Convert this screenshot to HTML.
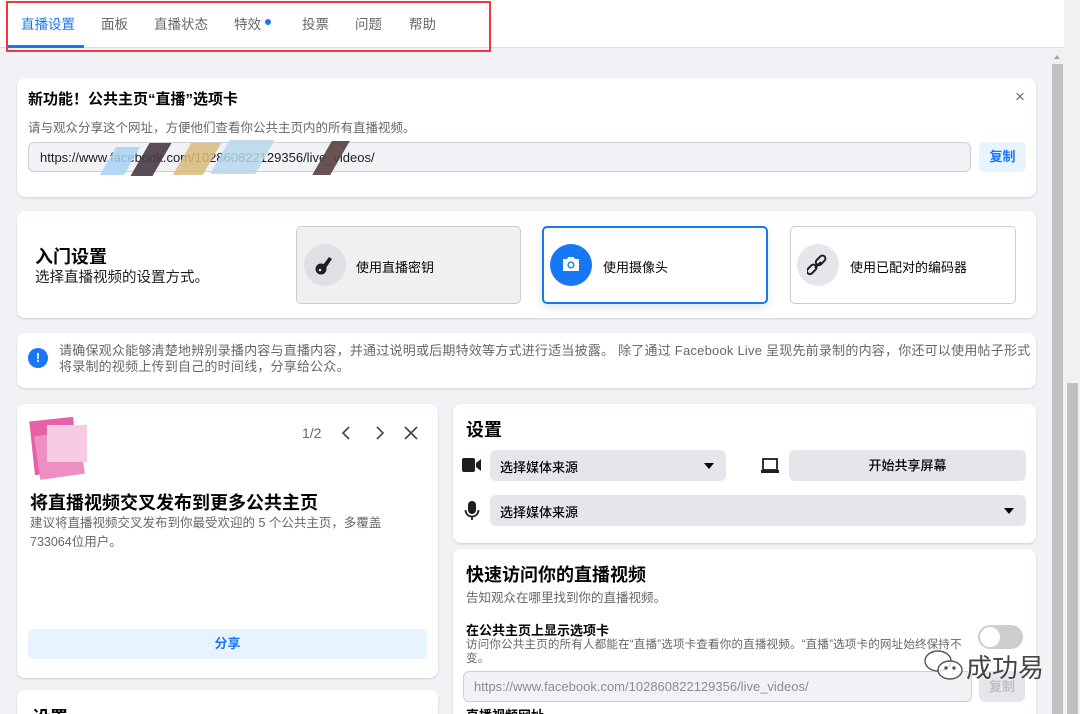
<!DOCTYPE html>
<html style="overflow:hidden"><head><meta charset="utf-8"><style>
*{box-sizing:border-box;margin:0;padding:0}
html,body{width:1080px;height:714px;overflow:hidden}
body{background:#f0f2f5;font-family:"Liberation Sans","Noto Sans CJK SC",sans-serif;color:#050505;position:relative}
.abs{position:absolute}
.card{position:absolute;background:#fff;border-radius:8px;box-shadow:0 1px 2px rgba(0,0,0,.15)}
.tab{position:absolute;top:13px;font-size:13.5px;color:#65676b}
.gray{color:#65676b}
.btn{position:absolute;border-radius:6px;background:#e4e6eb;font-size:13px}
.tri{position:absolute;width:0;height:0;border-left:5px solid transparent;border-right:5px solid transparent;border-top:6px solid #050505}
</style></head><body>
<div class="abs" style="left:0;top:0;width:1064px;height:48px;background:#fff;border-bottom:1px solid #dadde1"></div>
<div class="tab" style="left:21px;color:#1877f2">直播设置</div>
<div class="tab" style="left:101px">面板</div>
<div class="tab" style="left:154px">直播状态</div>
<div class="tab" style="left:234px">特效</div>
<div class="abs" style="left:265px;top:19px;width:6px;height:6px;border-radius:3px;background:#1877f2"></div>
<div class="tab" style="left:302px">投票</div>
<div class="tab" style="left:355px">问题</div>
<div class="tab" style="left:409px">帮助</div>
<div class="abs" style="left:8px;top:45px;width:76px;height:3px;background:#1877f2"></div>
<div class="abs" style="left:6px;top:1px;width:485px;height:51px;border:2px solid #ee3a3f"></div>

<div class="abs" style="left:1064px;top:0;width:16px;height:714px;background:#f1f1f1"></div>
<div class="abs" style="left:1067px;top:383px;width:11px;height:331px;background:#c1c1c1"></div>
<div class="abs" style="left:1050px;top:50px;width:14px;height:664px;background:#f1f1f1"></div>
<div class="abs" style="left:1052px;top:64px;width:11px;height:650px;background:#c1c1c1"></div>
<div class="abs" style="left:1054px;top:55px;width:0;height:0;border-left:3.5px solid transparent;border-right:3.5px solid transparent;border-bottom:4px solid #a3a3a3"></div>

<div class="card" style="left:17px;top:78px;width:1019px;height:119px"></div>
<div class="abs" style="left:28px;top:88px;font-size:15px;font-weight:bold">新功能！公共主页“直播”选项卡</div>
<div class="abs" style="left:1015px;top:87px;font-size:17px;color:#606770">×</div>
<div class="abs gray" style="left:28px;top:117px;font-size:12.5px">请与观众分享这个网址，方便他们查看你公共主页内的所有直播视频。</div>
<div class="abs" style="left:28px;top:142px;width:943px;height:30px;background:#f0f2f5;border:1px solid #ccd0d5;border-radius:6px;font-size:13px;padding:7px 0 0 11px;color:#1c1e21">https://www.facebook.com/102860822129356/live_videos/</div>
<div class="abs" style="left:108px;top:147px;width:24px;height:28px;background:#a9d2f2;transform:skewX(-30deg);opacity:.85"></div>
<div class="abs" style="left:140px;top:143px;width:22px;height:33px;background:#4a3a44;transform:skewX(-30deg);opacity:.9"></div>
<div class="abs" style="left:182px;top:143px;width:30px;height:32px;background:#d8bb7a;transform:skewX(-30deg);opacity:.85"></div>
<div class="abs" style="left:220px;top:140px;width:45px;height:34px;background:#b7d7ea;transform:skewX(-30deg);opacity:.85"></div>
<div class="abs" style="left:322px;top:141px;width:18px;height:34px;background:#5a4040;transform:skewX(-30deg);opacity:.9"></div>
<div class="abs" style="left:979px;top:142px;width:47px;height:30px;background:#e7f3ff;border-radius:6px;color:#1877f2;font-size:13px;font-weight:bold;text-align:center;line-height:30px">复制</div>

<div class="card" style="left:17px;top:211px;width:1019px;height:107px"></div>
<div class="abs" style="left:35px;top:243px;font-size:18px;font-weight:bold">入门设置</div>
<div class="abs" style="left:35px;top:266px;font-size:14.5px;color:#1c1e21">选择直播视频的设置方式。</div>
<div class="abs" style="left:296px;top:226px;width:225px;height:78px;background:#f0f0f0;border:1.5px solid #ccc;border-radius:5px"></div>
<div class="abs" style="left:304px;top:244px;width:42px;height:42px;border-radius:21px;background:#e0e0e4"></div>
<svg class="abs" style="left:313px;top:253px" width="24" height="24" viewBox="0 0 24 24"><circle cx="8" cy="16" r="5.5" fill="#1c1e21"/><path d="M10 12 L16 4 L19 6 L13 15Z" fill="#1c1e21"/><circle cx="7" cy="17" r="1.3" fill="#e0e0e4"/></svg>
<div class="abs" style="left:356px;top:257px;font-size:13px">使用直播密钥</div>
<div class="abs" style="left:542px;top:226px;width:226px;height:78px;background:#fff;border:2px solid #1877f2;border-radius:5px;box-shadow:0 4px 10px rgba(0,0,0,.1)"></div>
<div class="abs" style="left:550px;top:244px;width:42px;height:42px;border-radius:21px;background:#1877f2"></div>
<svg class="abs" style="left:561px;top:254px" width="20" height="20" viewBox="0 0 20 20"><path d="M2 5 H6 L7.5 3 H12.5 L14 5 H18 V17 H2Z" fill="#fff"/><circle cx="10" cy="11" r="3.6" fill="#1877f2"/><circle cx="10" cy="11" r="2.2" fill="#fff"/></svg>
<div class="abs" style="left:603px;top:257px;font-size:13px">使用摄像头</div>
<div class="abs" style="left:790px;top:226px;width:226px;height:78px;background:#fff;border:1.5px solid #ccc;border-radius:5px"></div>
<div class="abs" style="left:797px;top:244px;width:42px;height:42px;border-radius:21px;background:#e4e6eb"></div>
<svg class="abs" style="left:807px;top:254px" width="22" height="22" viewBox="0 0 22 22" fill="none" stroke="#1c1e21" stroke-width="2"><rect x="2" y="10" width="6" height="11" rx="3" transform="rotate(45 5 15)"/><rect x="11" y="1" width="6" height="11" rx="3" transform="rotate(45 14 6)"/><path d="M8 14 L14 8"/></svg>
<div class="abs" style="left:850px;top:257px;font-size:13px">使用已配对的编码器</div>

<div class="card" style="left:17px;top:333px;width:1019px;height:55px"></div>
<div class="abs" style="left:28px;top:348px;width:20px;height:20px;border-radius:10px;background:#1877f2;color:#fff;font-weight:bold;font-size:13px;text-align:center;line-height:20px">!</div>
<div class="abs gray" style="left:59px;top:343px;width:972px;font-size:13px;line-height:16px;letter-spacing:0.22px">请确保观众能够清楚地辨别录播内容与直播内容，并通过说明或后期特效等方式进行适当披露。 除了通过 Facebook Live 呈现先前录制的内容，你还可以使用帖子形式将录制的视频上传到自己的时间线，分享给公众。</div>

<div class="card" style="left:17px;top:404px;width:421px;height:274px"></div>
<div class="abs" style="left:32px;top:419px;width:44px;height:54px;background:#e561a8;transform:rotate(-6deg)"></div>
<div class="abs" style="left:37px;top:433px;width:45px;height:44px;background:#ee8fc3;transform:rotate(-8deg)"></div>
<div class="abs" style="left:47px;top:425px;width:40px;height:37px;background:#f7cbe3"></div>
<div class="abs gray" style="left:302px;top:425px;font-size:14px">1/2</div>
<svg class="abs" style="left:338px;top:425px" width="90" height="16" viewBox="0 0 90 16" fill="none" stroke="#444" stroke-width="1.6"><path d="M11 2 L5 8 L11 14"/><path d="M39 2 L45 8 L39 14"/><path d="M67 2 L79 14 M79 2 L67 14"/></svg>
<div class="abs" style="left:30px;top:489px;font-size:18px;font-weight:bold">将直播视频交叉发布到更多公共主页</div>
<div class="abs gray" style="left:30px;top:514px;width:370px;font-size:12.5px;line-height:19px">建议将直播视频交叉发布到你最受欢迎的 5 个公共主页，多覆盖733064位用户。</div>
<div class="abs" style="left:28px;top:629px;width:399px;height:30px;background:#e7f3ff;border-radius:6px;color:#1877f2;font-size:13px;font-weight:bold;text-align:center;line-height:30px">分享</div>
<div class="card" style="left:17px;top:690px;width:421px;height:40px"></div>
<div class="abs" style="left:32px;top:704px;font-size:18px;font-weight:bold">设置</div>

<div class="card" style="left:453px;top:404px;width:583px;height:139px"></div>
<div class="abs" style="left:466px;top:416px;font-size:18px;font-weight:bold">设置</div>
<svg class="abs" style="left:462px;top:458px" width="20" height="14" viewBox="0 0 20 14"><rect x="0" y="0" width="13" height="14" rx="2" fill="#1c1e21"/><path d="M14 5 L19 1 V13 L14 9Z" fill="#1c1e21"/></svg>
<div class="btn" style="left:490px;top:450px;width:236px;height:31px;padding:7px 0 0 10px;font-weight:500">选择媒体来源</div>
<div class="tri" style="left:704px;top:463px"></div>
<svg class="abs" style="left:761px;top:458px" width="18" height="16" viewBox="0 0 18 16"><rect x="2" y="1" width="14" height="11" fill="none" stroke="#1c1e21" stroke-width="1.8"/><rect x="0" y="12" width="18" height="3" fill="#1c1e21"/></svg>
<div class="btn" style="left:789px;top:450px;width:237px;height:31px;text-align:center;line-height:31px;font-weight:500">开始共享屏幕</div>
<svg class="abs" style="left:464px;top:501px" width="16" height="20" viewBox="0 0 16 20"><rect x="4" y="0" width="8" height="13" rx="4" fill="#1c1e21"/><path d="M1.5 9 A6.5 6.5 0 0 0 14.5 9 M8 15.5 V19" fill="none" stroke="#1c1e21" stroke-width="1.8"/></svg>
<div class="btn" style="left:490px;top:495px;width:536px;height:31px;padding:7px 0 0 10px;font-weight:500">选择媒体来源</div>
<div class="tri" style="left:1004px;top:508px"></div>

<div class="card" style="left:453px;top:549px;width:583px;height:180px"></div>
<div class="abs" style="left:466px;top:561px;font-size:18px;font-weight:bold">快速访问你的直播视频</div>
<div class="abs gray" style="left:466px;top:587px;font-size:12.5px">告知观众在哪里找到你的直播视频。</div>
<div class="abs" style="left:466px;top:620px;font-size:13px;font-weight:bold">在公共主页上显示选项卡</div>
<div class="abs gray" style="left:466px;top:638px;width:500px;font-size:11.5px;line-height:14px;letter-spacing:0.2px">访问你公共主页的所有人都能在“直播”选项卡查看你的直播视频。“直播”选项卡的网址始终保持不变。</div>
<div class="abs" style="left:978px;top:625px;width:45px;height:24px;border-radius:12px;background:#ccced2"></div>
<div class="abs" style="left:980px;top:627px;width:20px;height:20px;border-radius:10px;background:#fff"></div>
<div class="abs" style="left:463px;top:671px;width:509px;height:31px;background:#f0f2f5;border:1px solid #ccd0d5;border-radius:6px;font-size:13px;padding:7px 0 0 10px;color:#8a8d91">https://www.facebook.com/102860822129356/live_videos/</div>
<div class="abs" style="left:979px;top:671px;width:46px;height:31px;background:#e4e6eb;border-radius:6px;color:#bcc0c4;font-size:13px;font-weight:bold;text-align:center;line-height:31px">复制</div>
<div class="abs" style="left:466px;top:705px;font-size:13px;font-weight:bold">直播视频网址</div>

<svg class="abs" style="left:922px;top:648px" width="44" height="36" viewBox="0 0 44 36" fill="none" stroke="#555" stroke-width="1.4"><ellipse cx="16" cy="13" rx="13" ry="10" fill="rgba(255,255,255,.6)"/><ellipse cx="28" cy="22" rx="12" ry="9" fill="rgba(255,255,255,.8)"/><circle cx="24" cy="20" r="1" fill="#555"/><circle cx="32" cy="20" r="1" fill="#555"/></svg>
<div class="abs" style="left:966px;top:648px;font-size:26px;color:#444;text-shadow:0 0 2px #fff">成功易</div>
</body></html>
